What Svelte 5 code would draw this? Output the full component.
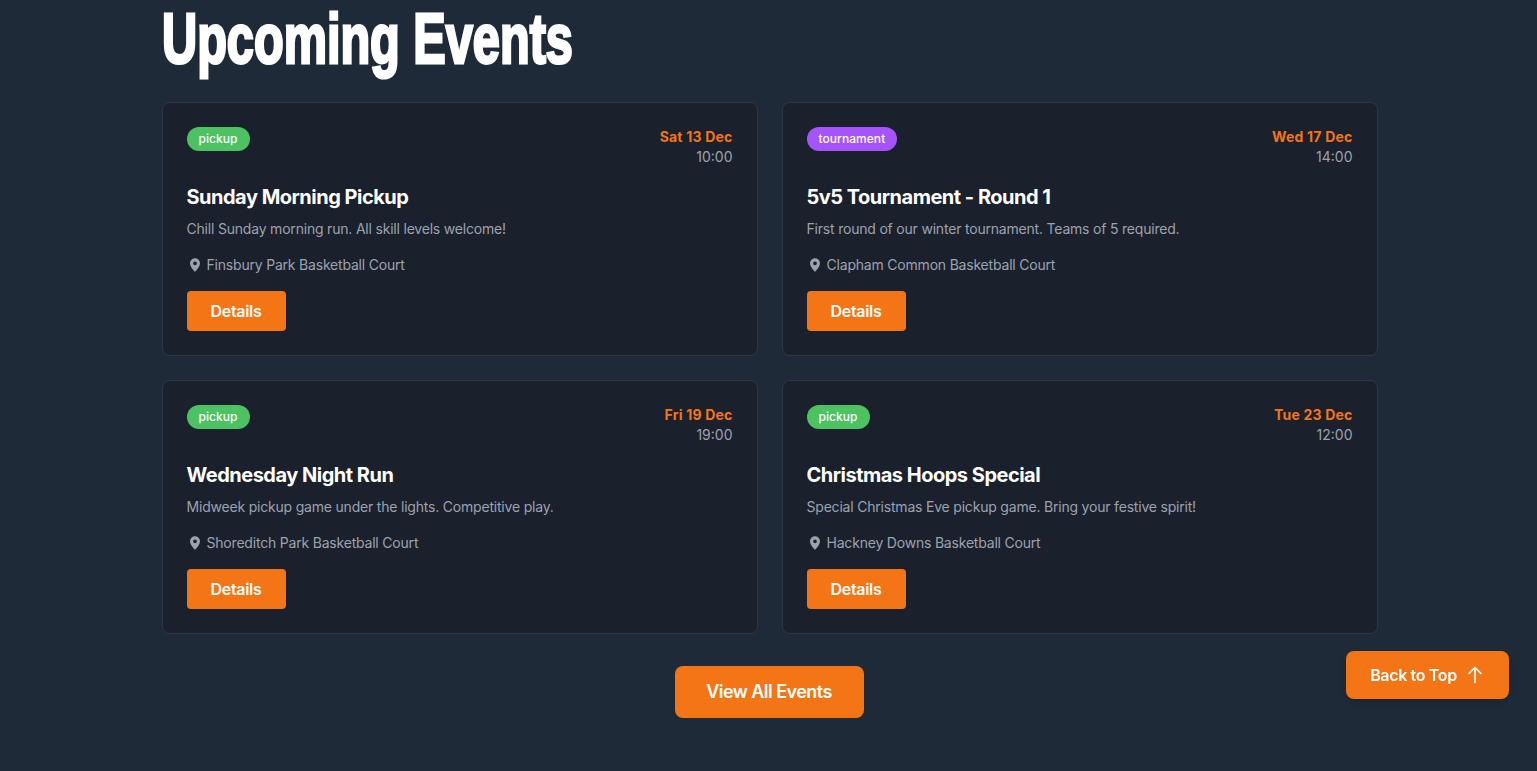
<script lang="ts">
  const events = [
    { type: "pickup", date: "Sat 13 Dec", time: "10:00", title: "Sunday Morning Pickup", desc: "Chill Sunday morning run. All skill levels welcome!", place: "Finsbury Park Basketball Court" },
    { type: "tournament", date: "Wed 17 Dec", time: "14:00", title: "5v5 Tournament - Round 1", desc: "First round of our winter tournament. Teams of 5 required.", place: "Clapham Common Basketball Court" },
    { type: "pickup", date: "Fri 19 Dec", time: "19:00", title: "Wednesday Night Run", desc: "Midweek pickup game under the lights. Competitive play.", place: "Shoreditch Park Basketball Court" },
    { type: "pickup", date: "Tue 23 Dec", time: "12:00", title: "Christmas Hoops Special", desc: "Special Christmas Eve pickup game. Bring your festive spirit!", place: "Hackney Downs Basketball Court" },
  ];
</script>

<main class="page">
  <section class="events">
    <h2 class="heading"><span>Upcoming Events</span></h2>

    <div class="grid">
      {#each events as ev}
        <article class="card">
          <div class="top">
            <span class="badge {ev.type}">{ev.type}</span>
            <div class="when">
              <div class="date">{ev.date}</div>
              <div class="time">{ev.time}</div>
            </div>
          </div>
          <h3 class="title">{ev.title}</h3>
          <p class="desc">{ev.desc}</p>
          <div class="place">
            <svg width="16" height="16" viewBox="0 0 24 24" fill="currentColor" aria-hidden="true">
              <path fill-rule="evenodd" d="M12 2a7.5 7.5 0 0 0-7.5 7.5c0 5.2 6.2 11.6 6.9 12.2a.85.85 0 0 0 1.2 0c.7-.6 6.9-7 6.9-12.2A7.5 7.5 0 0 0 12 2Zm0 10.2a2.8 2.8 0 1 1 0-5.6 2.8 2.8 0 0 1 0 5.6Z" />
            </svg>
            <span>{ev.place}</span>
          </div>
          <button class="details">Details</button>
        </article>
      {/each}
    </div>

    <div class="more">
      <button class="view-all">View All Events</button>
    </div>
  </section>

  <button class="to-top">
    Back to Top
    <svg width="20" height="20" viewBox="0 0 24 24" fill="none" stroke="currentColor" stroke-width="2" stroke-linecap="round" stroke-linejoin="round" aria-hidden="true">
      <path d="M12 21V3M5 10l7-7 7 7" />
    </svg>
  </button>
</main>

<style>
  :global(body) {
    margin: 0;
    background: #1e2a38;
  }

  .page {
    height: 771px;
    overflow: hidden;
    background: #1e2a38;
    font-family: Inter, "Liberation Sans", sans-serif;
    color: #fff;
  }

  .events {
    width: 1216px;
    margin: 0 auto;
    padding-left: 1px;
    box-sizing: border-box;
  }

  /* no Anton here, so squeeze and thicken a bold sans */
  .heading {
    margin: 0;
    height: 102px;
    font-family: "Liberation Sans", sans-serif;
    font-size: 70px;
    line-height: 78px;
    font-weight: 700;
    white-space: nowrap;
  }

  .heading span {
    display: inline-block;
    transform: scaleX(0.695);
    transform-origin: left top;
    -webkit-text-stroke: 3px #fff;
  }

  .grid {
    display: grid;
    grid-template-columns: 596px 596px;
    gap: 24px;
  }

  .card {
    height: 254px;
    box-sizing: border-box;
    padding: 24px;
    background: #1a202c;
    border: 1px solid #2d3748;
    border-radius: 8px;
  }

  .top {
    display: flex;
    justify-content: space-between;
    align-items: flex-start;
  }

  .badge {
    display: block;
    height: 24px;
    padding: 0 12px;
    border-radius: 12px;
    font-size: 12px;
    font-weight: 500;
    line-height: 24px;
    letter-spacing: 0.05px;
  }

  .pickup {
    background: #4cc262;
  }

  .tournament {
    background: #a554fb;
  }

  .when {
    text-align: right;
    font-size: 14px;
    line-height: 20px;
  }

  .date {
    color: #f47515;
    font-weight: 700;
    letter-spacing: 0.2px;
  }

  .time {
    color: #9ca3af;
  }

  .title {
    margin: 16px 0 0;
    font-size: 20px;
    line-height: 28px;
    font-weight: 700;
    letter-spacing: -0.5px;
  }

  .desc {
    margin: 8px 0 0;
    font-size: 14px;
    line-height: 20px;
    letter-spacing: -0.2px;
    color: #9ca3af;
  }

  .place {
    display: flex;
    align-items: center;
    gap: 4px;
    margin-top: 16px;
    font-size: 14px;
    line-height: 20px;
    letter-spacing: -0.2px;
    color: #9ca3af;
  }

  button {
    border: 0;
    background: #f47515;
    color: #fff;
    font-family: inherit;
    cursor: pointer;
  }

  .details {
    display: block;
    width: 99px;
    height: 40px;
    margin-top: 16px;
    border-radius: 4px;
    font-size: 16px;
    font-weight: 600;
    letter-spacing: -0.3px;
  }

  .more {
    display: flex;
    justify-content: center;
    margin-top: 32px;
  }

  .view-all {
    width: 189px;
    height: 52px;
    padding-bottom: 3px;
    border-radius: 8px;
    font-size: 18px;
    font-weight: 600;
    letter-spacing: -0.55px;
  }

  .to-top {
    position: fixed;
    left: 1346px;
    top: 651px;
    width: 163px;
    height: 48px;
    display: flex;
    align-items: center;
    justify-content: center;
    gap: 8px;
    border-radius: 8px;
    font-size: 16px;
    font-weight: 600;
    letter-spacing: -0.35px;
    box-shadow: 0 4px 6px rgba(0, 0, 0, 0.1);
  }
</style>
